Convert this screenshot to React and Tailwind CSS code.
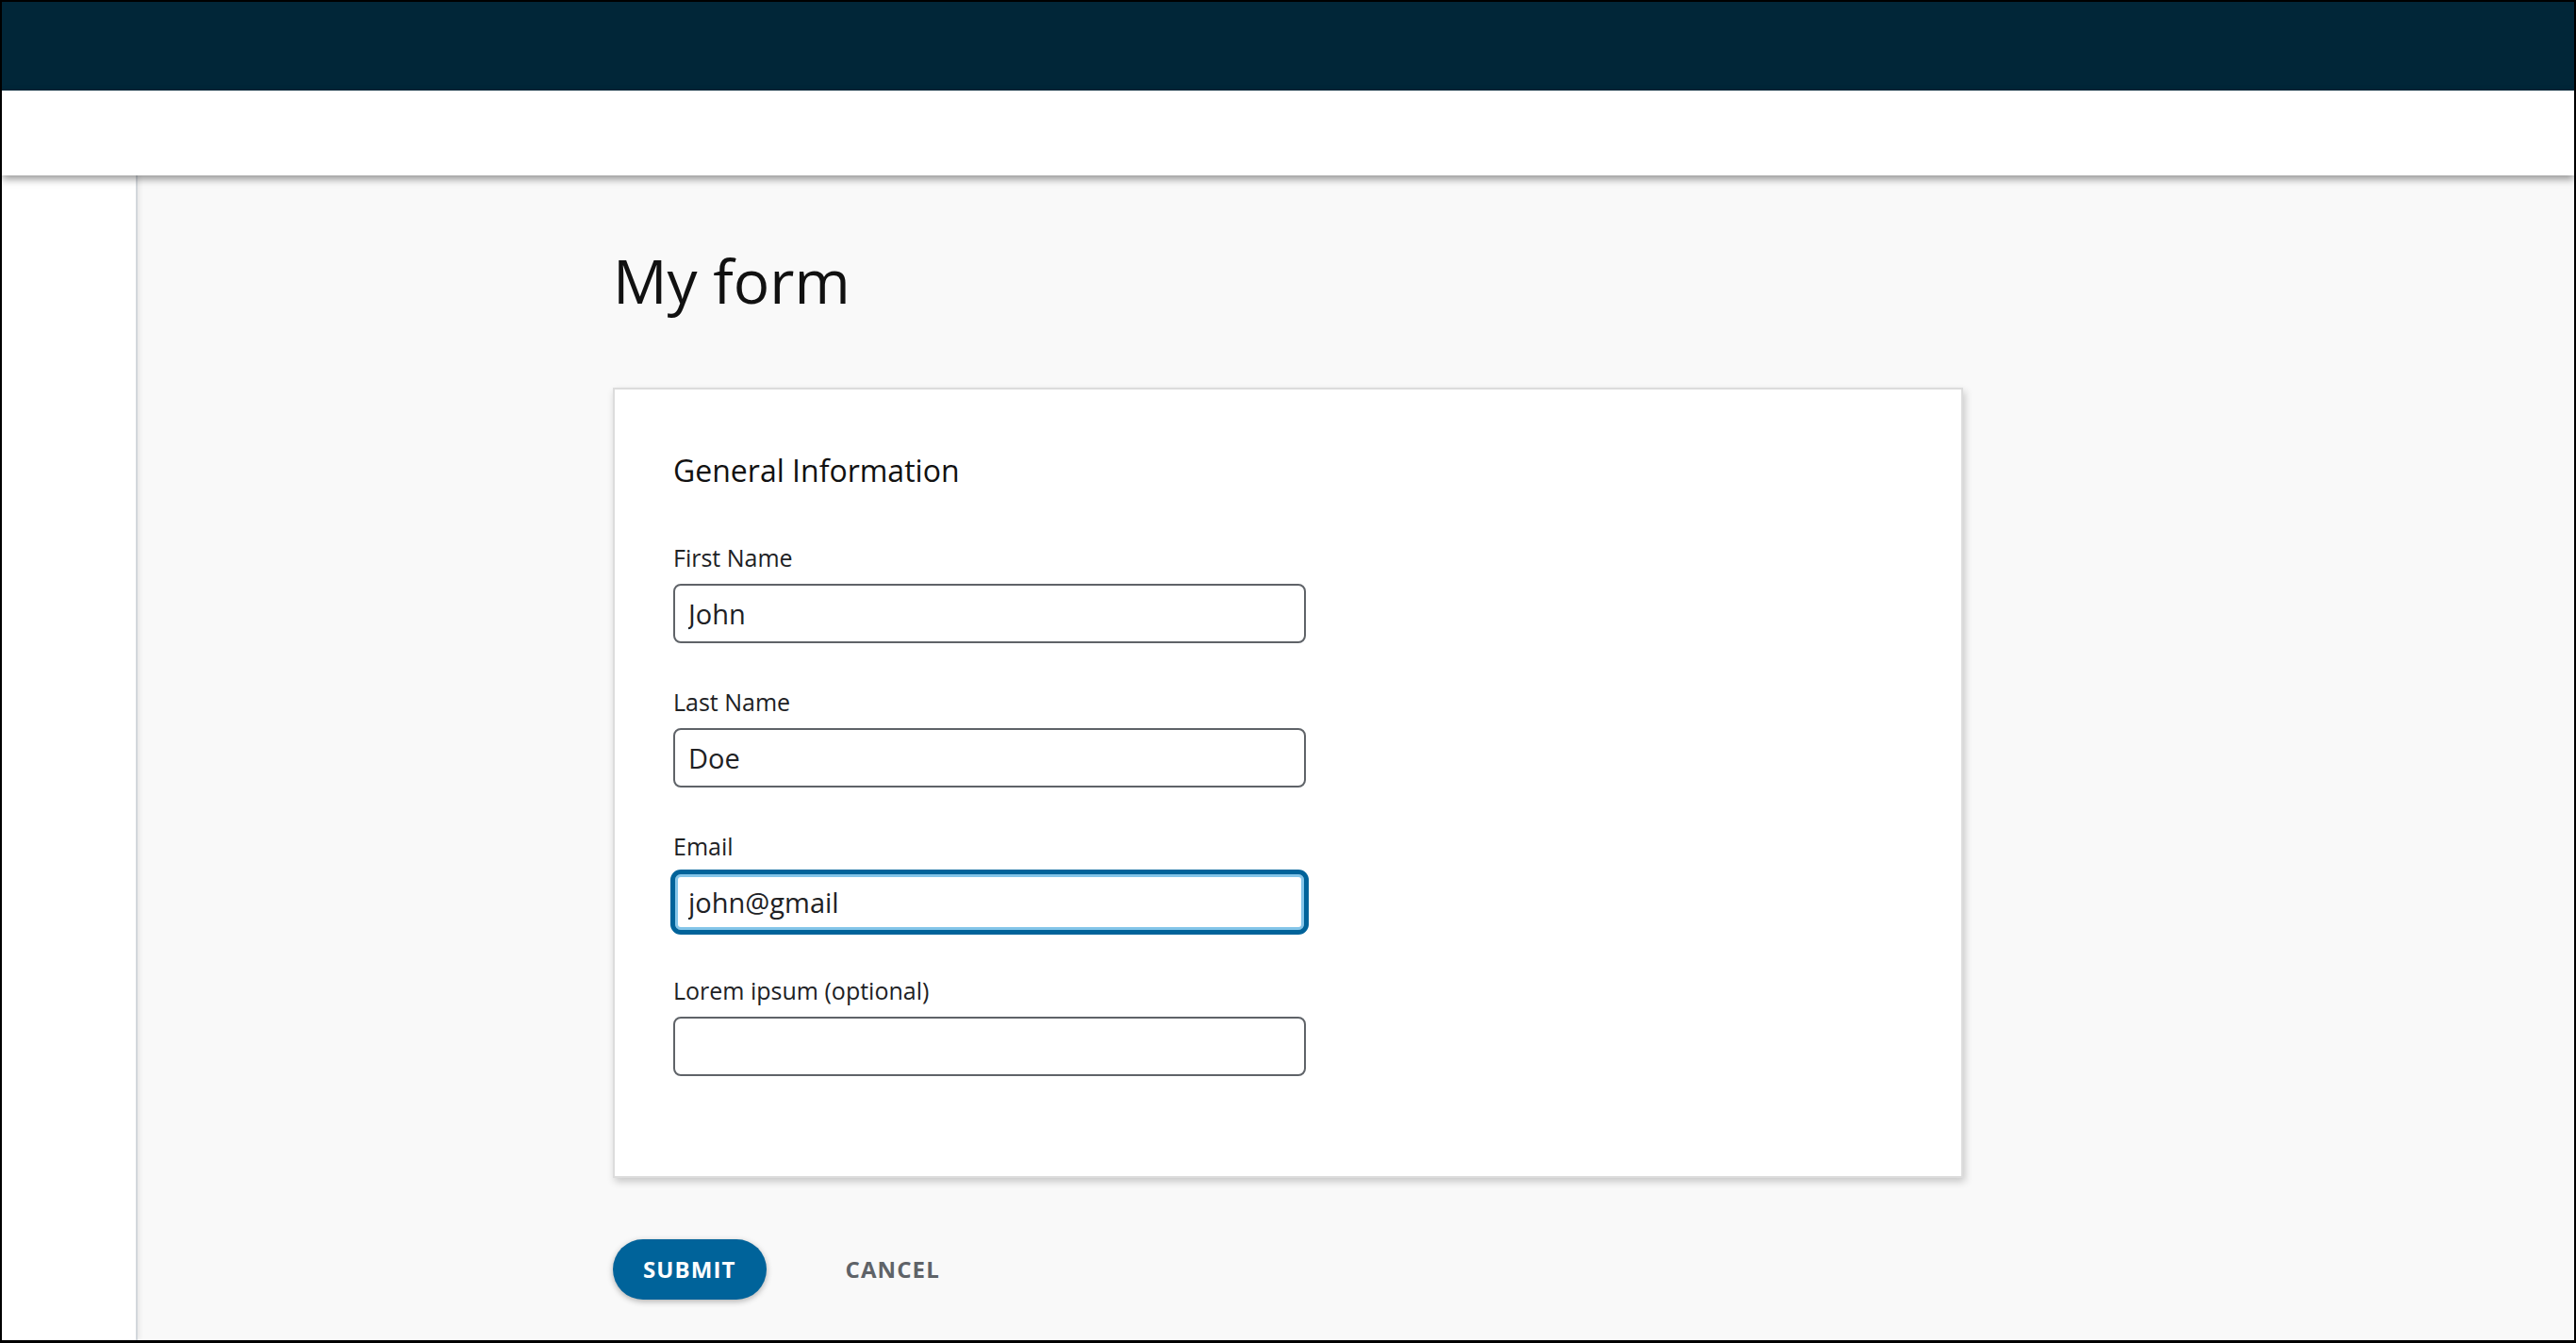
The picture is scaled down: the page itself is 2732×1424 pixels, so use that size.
import { useState } from 'react';

const fields = [
  { id: 'first', label: 'First Name', value: 'John' },
  { id: 'last', label: 'Last Name', value: 'Doe' },
  { id: 'email', label: 'Email', value: 'john@gmail', focused: true },
  { id: 'lorem', label: 'Lorem ipsum (optional)', value: '' },
];

function Field({ label, value, focused }) {
  const [val, setVal] = useState(value);
  return (
    <div className="mb-[44px] flex flex-col">
      <label className="text-[25px] leading-[36px] text-[#202124]">{label}</label>
      <input
        value={val}
        onChange={e => setVal(e.target.value)}
        className={
          focused
            ? 'mt-[10px] w-[671px] h-[63px] rounded-[8px] bg-white pl-[14px] pr-[12px] text-[29px] text-[#202124] outline-none border-2 border-[#00639a] shadow-[0_0_0_3px_#00639a,inset_0_0_0_3px_#84c5e9]'
            : 'mt-[10px] w-[671px] h-[63px] rounded-[8px] bg-white pl-[14px] pr-[12px] text-[29px] text-[#202124] outline-none border-2 border-[#5f6368]'
        }
      />
    </div>
  );
}

export default function App() {
  return (
    <div className="h-[1424px] w-[2732px] flex flex-col border-2 border-b-[3px] border-black bg-[#f9f9f9] overflow-hidden font-['Open_Sans',sans-serif]">
      {/* top bars */}
      <div className="h-[94px] shrink-0 bg-[#012638]" />
      <div className="relative z-10 h-[90px] shrink-0 bg-white shadow-[0_4px_8px_rgba(0,0,0,0.4)]" />

      <div className="flex flex-1 min-h-0">
        <aside className="w-[144px] shrink-0 bg-white border-r-2 border-[#d3d7dc] shadow-[2px_0_5px_rgba(0,0,0,0.08)]" />

        <main className="flex-1 pl-[504px] pt-[72px]">
          <h1 className="text-[64px] leading-[79px] text-[#111]">My form</h1>

          <div className="mt-[74px] w-[1432px] bg-white border-2 border-[#dcdcdc] px-[62px] pt-[67px] pb-[62px] shadow-[2px_4px_8px_rgba(0,0,0,0.2)]">
            <h2 className="text-[32px] leading-[38px] text-[#111]">General Information</h2>
            <div className="mt-[55px]">
              {fields.map(f => (
                <Field key={f.id} {...f} />
              ))}
            </div>
          </div>

          <div className="mt-[65px] flex items-center gap-[52px]">
            <button className="h-[64px] rounded-full bg-[#00639a] px-8 text-[24px] font-bold tracking-[1.1px] text-white shadow-[0_2px_6px_rgba(0,0,0,0.3)]">
              SUBMIT
            </button>
            <button className="h-[64px] px-8 text-[24px] font-bold tracking-[1.1px] text-[#5f6368]">
              CANCEL
            </button>
          </div>
        </main>
      </div>
    </div>
  );
}
